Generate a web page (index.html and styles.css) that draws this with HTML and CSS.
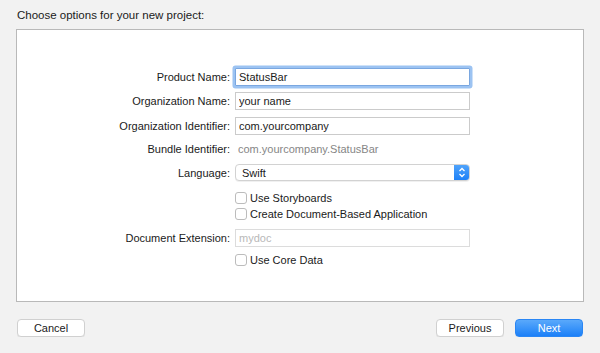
FILE: index.html
```html
<!DOCTYPE html>
<html lang="en">
<head>
    <meta charset="UTF-8">
    <title>Choose options for your new project</title>
    <link rel="stylesheet" href="styles.css">
</head>
<body>
    <div class="header">Choose options for your new project:</div>

    <div class="panel">
        <div class="form">
            <div class="row r-product">
                <label>Product Name:</label>
                <input class="field focused" type="text" value="StatusBar">
            </div>
            <div class="row r-org">
                <label>Organization Name:</label>
                <input class="field" type="text" value="your name">
            </div>
            <div class="row r-orgid">
                <label>Organization Identifier:</label>
                <input class="field" type="text" value="com.yourcompany">
            </div>
            <div class="row r-bundle">
                <label>Bundle Identifier:</label>
                <span class="static">com.yourcompany.StatusBar</span>
            </div>
            <div class="row r-lang">
                <label>Language:</label>
                <div class="popup">
                    <span>Swift</span>
                    <span class="stepper">
                        <svg width="8" height="11" viewBox="0 0 8 11">
                            <path d="M1.5 4 L4 1.5 L6.5 4" fill="none" stroke="#fff" stroke-width="1.3"/>
                            <path d="M1.5 7 L4 9.5 L6.5 7" fill="none" stroke="#fff" stroke-width="1.3"/>
                        </svg>
                    </span>
                </div>
            </div>
            <div class="row r-story">
                <span></span>
                <div class="check"><span class="box"></span>Use Storyboards</div>
            </div>
            <div class="row r-doc">
                <span></span>
                <div class="check"><span class="box"></span>Create Document-Based Application</div>
            </div>
            <div class="row r-ext">
                <label>Document Extension:</label>
                <input class="field disabled" type="text" placeholder="mydoc">
            </div>
            <div class="row r-core">
                <span></span>
                <div class="check"><span class="box"></span>Use Core Data</div>
            </div>
        </div>
    </div>

    <div class="footer">
        <button class="btn">Cancel</button>
        <div class="nav">
            <button class="btn">Previous</button>
            <button class="btn primary">Next</button>
        </div>
    </div>
</body>
</html>
```

FILE: styles.css
```css
/* --- General --- */
body {
    margin: 0;
    background-color: #f2f2f2;
    font-family: 'Liberation Sans', Arial, sans-serif;
    font-size: 11px;
    color: #1a1a1a;
}

.header {
    height: 29px;
    display: flex;
    align-items: center;
    padding-left: 17px;
    font-size: 11.5px;
    color: #1a1a1a;
}

/* --- Options panel --- */
.panel {
    margin: 0 16px;
    height: 271px;
    background-color: #fff;
    border: 1px solid #b9b9b9;
}

.form {
    display: flex;
    flex-direction: column;
    padding-top: 38px;
}

.row {
    display: grid;
    grid-template-columns: 213px 235px;
    column-gap: 5px;
    align-items: center;
}

.row label {
    text-align: right;
}

.r-product { height: 18px; }
.r-org     { height: 18px; margin-top: 6px; }
.r-orgid   { height: 18px; margin-top: 7px; }
.r-bundle  { height: 16px; margin-top: 6px; }
.r-lang    { height: 17px; margin-top: 7px; }
.r-story   { height: 16px; margin-top: 9px; }
.r-doc     { height: 16px; }
.r-ext     { height: 18px; margin-top: 7px; }
.r-core    { height: 16px; margin-top: 5px; }

.field {
    box-sizing: border-box;
    width: 235px;
    height: 18px;
    margin: 0;
    padding: 0 3px;
    border: 1px solid #cbcbcb;
    border-radius: 0;
    outline: none;
    font-family: inherit;
    font-size: 11px;
    color: #1a1a1a;
    background: #fff;
}

.field.focused {
    border-color: #7aa7e0;
    box-shadow: 0 0 0 2.5px #9cc3f2;
    border-radius: 1px;
}

.field.disabled {
    border-color: #dcdcdc;
}

.field::placeholder {
    color: #b8b8b8;
}

.static {
    padding-left: 3px;
    color: #868686;
}

/* --- Popup button --- */
.popup {
    box-sizing: border-box;
    width: 235px;
    height: 17px;
    display: flex;
    align-items: center;
    justify-content: space-between;
    padding-left: 6px;
    background: #fff;
    border: 1px solid #d2d2d2;
    border-radius: 4px;
    box-shadow: 0 1px 0 rgba(0, 0, 0, 0.06);
    overflow: hidden;
}

.stepper {
    width: 16px;
    height: 17px;
    margin-right: -1px;
    display: flex;
    align-items: center;
    justify-content: center;
    background: linear-gradient(#52a5fb, #1b7ff7);
    border-radius: 0 4px 4px 0;
}

/* --- Checkboxes --- */
.check {
    display: flex;
    align-items: center;
    gap: 3px;
}

.box {
    box-sizing: border-box;
    width: 12px;
    height: 12px;
    border: 1px solid #bcbcbc;
    border-radius: 3px;
    background: #fff;
}

/* --- Footer buttons --- */
.footer {
    display: flex;
    justify-content: space-between;
    margin: 17px 17px 0 17px;
}

.nav {
    display: flex;
    gap: 11px;
}

.btn {
    box-sizing: border-box;
    width: 68px;
    height: 18px;
    padding: 0;
    font-family: inherit;
    font-size: 11px;
    color: #1a1a1a;
    background: #fff;
    border: 1px solid #d0d0d0;
    border-radius: 4px;
    box-shadow: 0 1px 0 rgba(0, 0, 0, 0.05);
}

.btn.primary {
    color: #fff;
    border-color: #2a86f4;
    background: linear-gradient(#5aa9fb, #1c80f8);
}
```
